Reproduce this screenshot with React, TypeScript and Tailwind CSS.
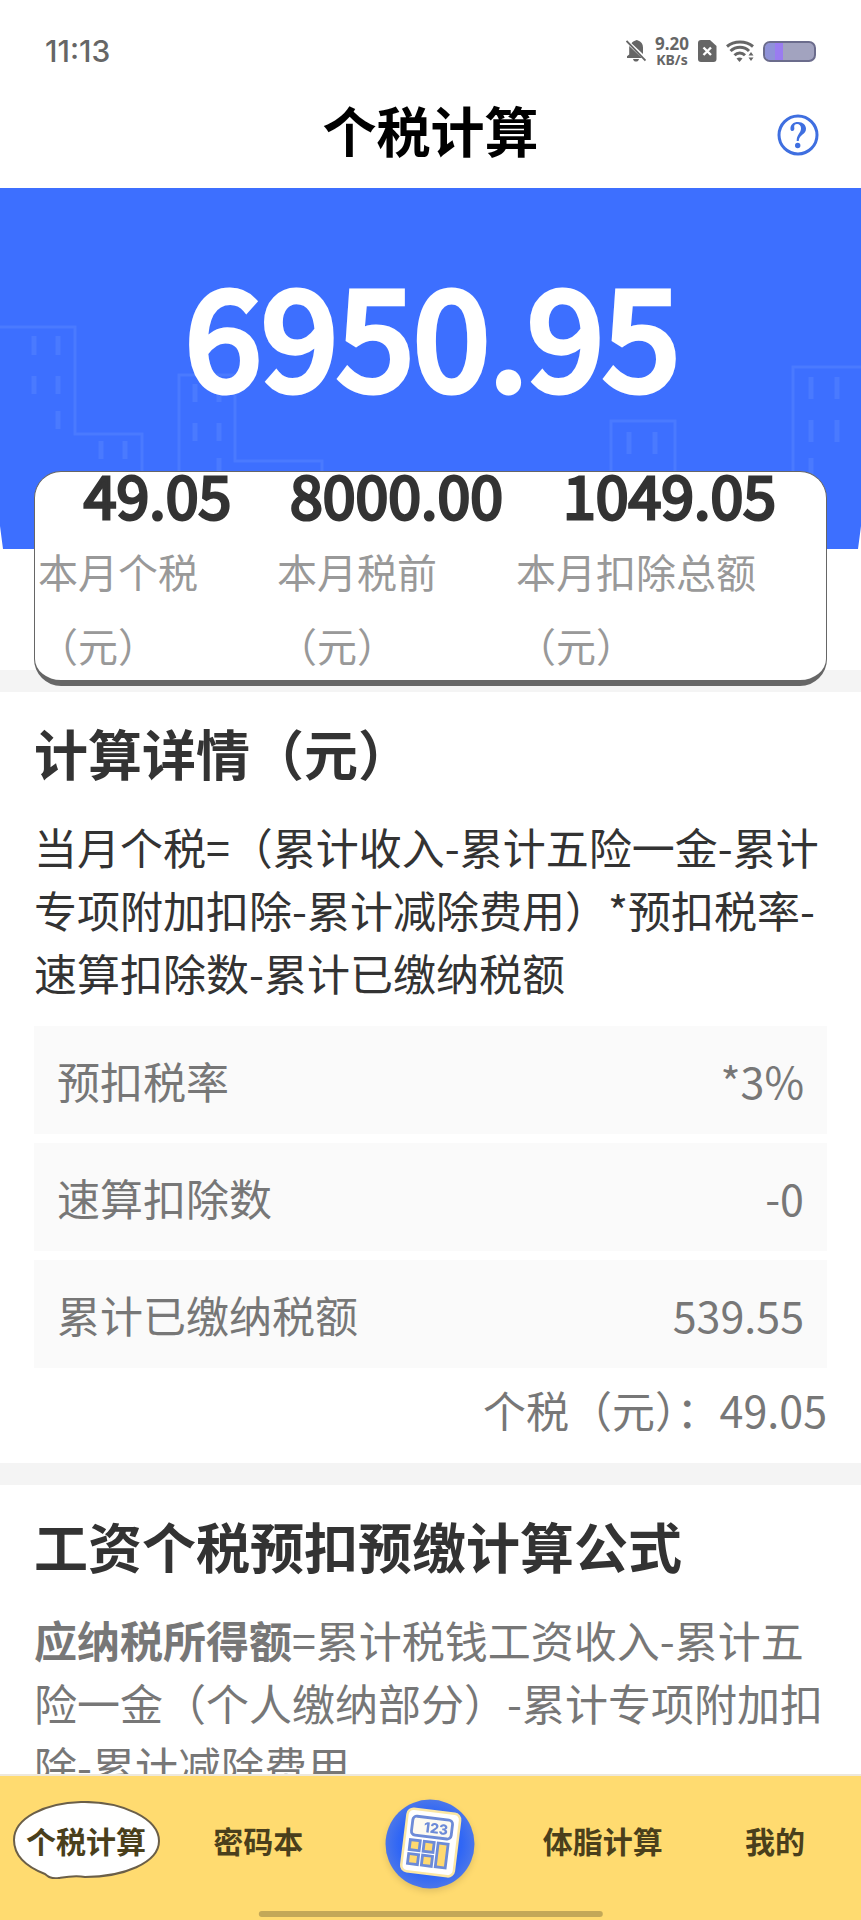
import type { ReactNode } from "react";

const stats = [
    { value: "49.05", label: "本月个税（元）" },
    { value: "8000.00", label: "本月税前（元）" },
    { value: "1049.05", label: "本月扣除总额（元）" },
];

const rows = [
    { label: "预扣税率", value: "*3%" },
    { label: "速算扣除数", value: "-0" },
    { label: "累计已缴纳税额", value: "539.55" },
];

// Phone status bar: time on the left, signal and battery on the right
function StatusBar() {
    return (
        <div className="flex h-[102px] items-center justify-between pl-[45px] pr-[45px] text-[#666]">
            <span className="font-['Inter',sans-serif] text-[30px] font-medium">11:13</span>
            <div className="flex items-center gap-[9px]">
                <svg viewBox="0 0 20 22" className="h-[22px] w-5" fill="currentColor">
                    <path d="M5.5 3.2 C6.5 1.8 8 1 9.5 0.6 C10 -0.1 11.5 -0.1 12 0.6 C15 1.5 17 4 17 7.5 V14 Z" />
                    <path d="M3.2 6 L15.8 18 H1 V16.2 L3.2 14.5 Z" />
                    <path d="M7 19 H13 C12.5 22.4 7.5 22.4 7 19 Z" />
                    <path d="M0.5 1 L19.5 20.5" stroke="currentColor" strokeWidth="1.8" />
                </svg>
                <div className="flex w-[34px] flex-col items-center font-['Noto_Sans',sans-serif] font-bold">
                    <span className="text-[17px] leading-[17px]">9.20</span>
                    <span className="text-[14px] leading-[15px]">KB/s</span>
                </div>
                <svg viewBox="0 0 19 22" className="h-[22px] w-[19px]">
                    <path d="M3 0 H12 L18.5 6 V19 Q18.5 22 15.5 22 H3 Q0 22 0 19 V3 Q0 0 3 0 Z" fill="#666" />
                    <path d="M5.5 7.5 L13 15 M13 7.5 L5.5 15" stroke="#fff" strokeWidth="2.4" />
                </svg>
                <svg viewBox="0 0 28 22" className="h-[22px] w-7" fill="none" stroke="#666" strokeWidth="3">
                    <path d="M1 6.5 C8 0.5 20 0.5 27 6.5" />
                    <path d="M4.5 11 C10 6 18 6 23 11" />
                    <path d="M8.5 15.2 C11.5 12.2 16 12.2 19 15.2" />
                    <path d="M10.5 18.5 Q13.5 16.5 16.5 18.5 L13.5 22 Z" fill="#666" stroke="none" />
                    <path d="M22.5 15.5 L25 12 L27.5 15.5 Z M22.5 17.5 L25 21 L27.5 17.5 Z" fill="#666" stroke="none" />
                </svg>
                <div className="flex h-[21px] w-[53px] overflow-hidden rounded-[7px] border-2 border-[#6b6c8c] bg-[#a2a3bf]">
                    <span className="w-[10px] bg-[#8f92d8]" />
                    <span className="w-[8px] bg-[#9a7cf0]" />
                </div>
            </div>
        </div>
    );
}

// Faint building outlines behind the big number
function Skyline() {
    return (
        <svg
            viewBox="0 0 861 361"
            preserveAspectRatio="none"
            className="absolute inset-0 h-full w-full"
            fill="none"
            stroke="#4a7aff"
            strokeWidth="3"
        >
            <path d="M0 139 H75 V246 H142 V361" />
            <path d="M179 361 V187 H235 V273 H322 V361" />
            <path d="M611 361 V233 H675 V361" />
            <path d="M793 361 V179 H861" />
            <path
                d="M34 148 V167 M58 148 V167 M34 188 V206 M58 188 V206 M58 223 V241 M101 253 V271 M125 253 V271 M195 196 V214 M219 196 V214 M195 235 V253 M219 235 V253 M219 270 V288 M629 244 V266 M655 244 V266 M811 189 V211 M837 189 V211 M811 232 V254 M837 232 V254 M811 270 V290"
                strokeWidth="5"
            />
            <path d="M0 338 V361 H3 Z M861 338 V361 H858 Z" fill="#fff" stroke="none" />
        </svg>
    );
}

function SectionTitle({ children }: { children: ReactNode }) {
    return <h2 className="text-[54px] leading-[70px] font-bold text-[#333]">{children}</h2>;
}

function CalculatorIcon() {
    return (
        <svg viewBox="0 0 90 90" className="h-[90px] w-[90px] drop-shadow-md">
            <defs>
                <radialGradient id="disc">
                    <stop offset="0.7" stopColor="#2f66f6" />
                    <stop offset="1" stopColor="#4a76ea" />
                </radialGradient>
            </defs>
            <circle cx="45" cy="45" r="44.5" fill="url(#disc)" />
            <g transform="rotate(7 45 45)">
                <rect x="19" y="12" width="53" height="63" rx="6" fill="#fff" stroke="#fbe7a4" strokeWidth="2.5" />
                <g stroke="#6d8bd8" strokeWidth="2.8" fill="#ffd970">
                    <rect x="25" y="19" width="40" height="19" rx="4" fill="#fdfaf0" />
                    <rect x="25" y="43" width="10" height="10" />
                    <rect x="39" y="43" width="10" height="10" />
                    <rect x="25" y="57" width="10" height="10" />
                    <rect x="39" y="57" width="10" height="10" />
                    <rect x="53" y="43" width="10" height="24" />
                </g>
                <text x="49" y="34" textAnchor="middle" fontSize="14" fontWeight="800" fill="#6d8bd8" fontFamily="Inter">
                    123
                </text>
            </g>
        </svg>
    );
}

// Bottom tabs
function TabBar() {
    return (
        <nav className="relative h-[146px] shrink-0 border-t-2 border-[#eee8dc] bg-[#ffdb70] font-bold text-[#4a3f1c]">
            <div className="grid h-32 grid-cols-5 items-center text-[30px]">
                <button type="button" className="relative h-[78px] w-[147px] justify-self-center">
                    <svg viewBox="0 0 147 78" className="absolute inset-0 h-full w-full">
                        <path
                            d="M68 1 C110 0 146 18 146 40 C146 62 110 76 72 76 C62 74 52 76 46 77 C40 78 36 77 32 73 C14 66 1 55 1 39 C1 17 32 2 68 1 Z"
                            fill="#fff"
                            stroke="#6b5f48"
                            strokeWidth="2"
                        />
                    </svg>
                    <span className="relative">个税计算</span>
                </button>
                <button type="button">密码本</button>
                <button type="button" aria-label="计算器" className="mt-2 justify-self-center">
                    <CalculatorIcon />
                </button>
                <button type="button">体脂计算</button>
                <button type="button">我的</button>
            </div>
            <div className="absolute bottom-[3px] left-1/2 h-[6px] w-2/5 -translate-x-1/2 rounded-full bg-[#c3a858]" />
        </nav>
    );
}

export default function App() {
    return (
        <div className="flex h-screen flex-col overflow-hidden bg-white font-['Noto_Sans_CJK_SC',sans-serif]">
            <header className="h-[188px] shrink-0">
                <StatusBar />
                <div className="grid grid-cols-[1fr_auto_1fr] items-end px-[42px]">
                    <h1 className="col-start-2 text-[54px] leading-[56px] font-bold text-black">个税计算</h1>
                    <button type="button" aria-label="帮助" className="justify-self-end pb-[2px]">
                        <svg viewBox="0 0 42 42" className="block h-[42px] w-[42px]" fill="#3f6fe0">
                            <circle cx="21" cy="21" r="19" fill="none" stroke="#3f6fe0" strokeWidth="3" />
                            <path d="M13.5 15.5 C13 10.5 16.5 8 21 8 C26 8 29 11 29 14.8 C29 20.5 22.3 20.5 21.7 27 H19.7 C19.5 20.5 24 19 24 14.5 C24 11.5 22.5 10 20 10 C18 10 17 11 17.2 13 C17.8 15.5 16.8 17 15.3 17 C14.3 17 13.6 16.3 13.5 15.5 Z" />
                            <circle cx="20.7" cy="31.5" r="2.7" />
                        </svg>
                    </button>
                </div>
            </header>

            <main className="min-h-0 flex-1 overflow-hidden text-[43px] leading-[63px]">
                <section className="relative flex h-[361px] justify-center bg-[#3d6fff] pt-[42px] pl-1">
                    <Skyline />
                    <strong className="relative text-[137px] leading-[200px] font-normal text-white [-webkit-text-stroke:7px_white]">
                        6950.95
                    </strong>
                </section>

                <section className="relative mx-[34px] -mt-[78px] rounded-[27px] border border-b-[6px] border-[#666] bg-white">
                    <dl className="flex h-[208px] pl-[3px]">
                        {stats.map((s) => (
                            <div key={s.label} className="flex w-[239px] shrink-0 flex-col-reverse justify-end last:w-[307px]">
                                <dt className="mt-[18px] w-[245px] text-[40px] leading-[74px] text-[#999]">{s.label}</dt>
                                <dd className="text-center text-[59px] leading-[44px] text-[#333] [-webkit-text-stroke:3px_#333]">
                                    {s.value}
                                </dd>
                            </div>
                        ))}
                    </dl>
                </section>
                <div className="-mt-4 h-[22px] bg-[#f4f4f4]" />

                <section className="px-[34px] pt-[26px] pb-[22px]">
                    <SectionTitle>计算详情（元）</SectionTitle>
                    <p className="mt-[27px] text-[#333]">
                        当月个税=（累计收入-累计五险一金-累计专项附加扣除-累计减除费用）*预扣税率-速算扣除数-累计已缴纳税额
                    </p>
                    <dl className="mt-[22px] flex flex-col gap-[9px] text-[#777]">
                        {rows.map((r) => (
                            <div key={r.label} className="flex h-[108px] items-center justify-between bg-[#fafafa] px-[23px]">
                                <dt>{r.label}</dt>
                                <dd>{r.value}</dd>
                            </div>
                        ))}
                    </dl>
                    <p className="mt-[10px] text-right text-[#777]">个税（元）：49.05</p>
                </section>
                <div className="h-[22px] bg-[#f4f4f4]" />

                <section className="px-[34px] pt-[26px]">
                    <SectionTitle>工资个税预扣预缴计算公式</SectionTitle>
                    <p className="mt-[27px] text-[#777]">
                        <strong>应纳税所得额</strong>=累计税钱工资收入-累计五险一金（个人缴纳部分）-累计专项附加扣除-累计减除费用
                    </p>
                </section>
            </main>

            <TabBar />
        </div>
    );
}
